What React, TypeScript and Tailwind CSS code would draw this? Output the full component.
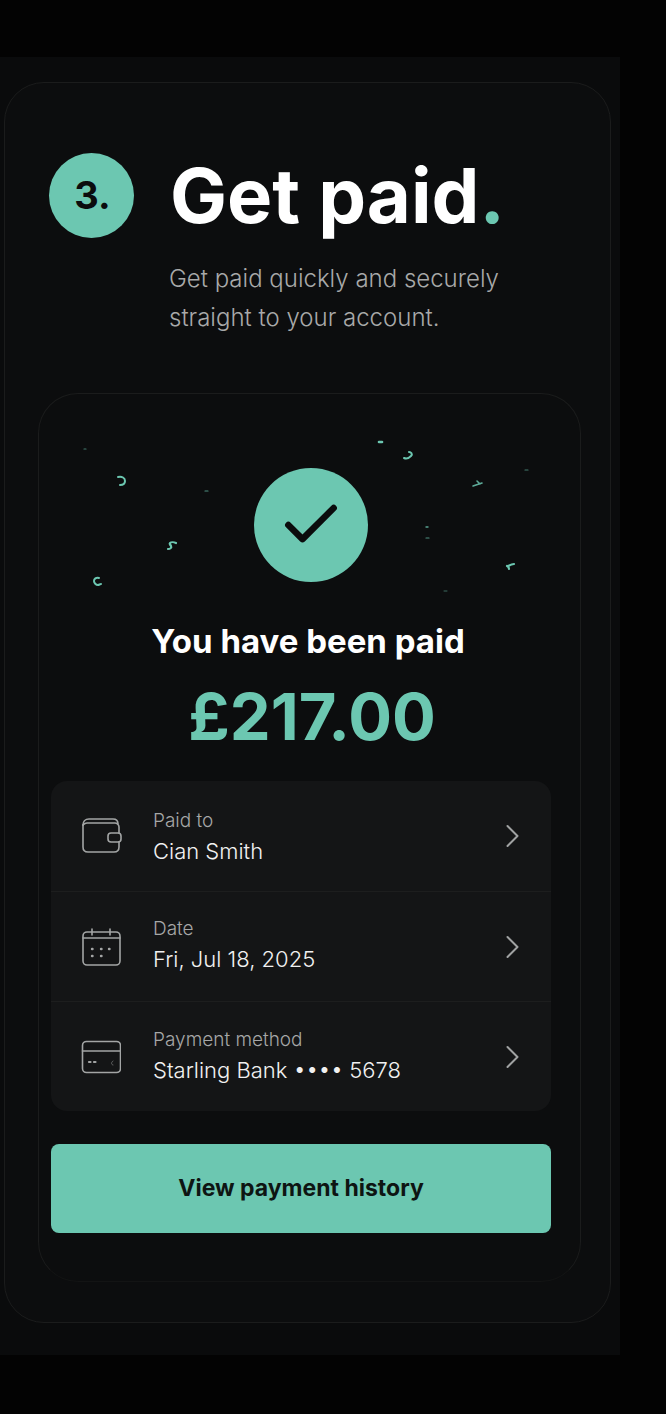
import { Check } from "lucide-react";
import type { ReactNode } from "react";

const FONT = "font-['Inter','Liberation_Sans',sans-serif]";

// confetti squiggles scattered around the tick
const CONFETTI: Array<[string, number, number]> = [
  ["M118 477c4-1 7 1 7 4s-2 4-5 4", 2, 1],
  ["M168 549c2 0 4-1 3-3s-2-2-1-3c1-1 4-1 6 0", 2.2, 1],
  ["M99 578c-3-1-5 1-5 3s2 4 4 4c1 0 2-1 3-1", 2, 1],
  ["M404 458c2 1 5 0 7-2s0-4-2-4", 2, 1],
  ["M379 442h3", 2.6, 1],
  ["M473 486l9-3M477 481l3 3", 1.6, 0.85],
  ["M507 566c2 1 2 3 2 3M508 566c2-1 5-2 6-2", 2.2, 1],
  ["M426 527h2", 1.4, 0.8],
  ["M426 538h3", 1.2, 0.7],
  ["M205 491h3", 1.2, 0.7],
  ["M84 449h2", 1.2, 0.6],
  ["M525 470h3", 1.2, 0.6],
  ["M444 591h3", 1, 0.5],
];

function WalletIcon() {
  return (
    <svg width="42" height="38" viewBox="0 0 42 38" fill="none" stroke="#a3a5a5" strokeWidth="1.6" strokeLinecap="round" strokeLinejoin="round">
      <path d="M2 8c0-3 2-6 6-6h24c3 0 5 2 5 5" />
      <path d="M2 8v22c0 3 2 5 5 5h26c3 0 5-2 5-5v-5" />
      <path d="M2 8c1-1 2-2 4-2h28c2 0 4 2 4 4v6" />
      <rect x="27" y="16" width="13" height="9" rx="3" />
    </svg>
  );
}

function CalendarIcon() {
  return (
    <svg width="40" height="40" viewBox="0 0 40 40" fill="none" stroke="#a3a5a5" strokeWidth="1.6" strokeLinecap="round" strokeLinejoin="round">
      <rect x="2" y="5" width="37" height="33" rx="4" />
      <path d="M2 11h37M11 2v6M29 2v6" />
      <path d="M11 22h.5M20 22h.5M28 22h.5M11 29h.5M20 29h.5" strokeWidth="2.400" />
    </svg>
  );
}

function CardIcon() {
  return (
    <svg width="40" height="34" viewBox="0 0 40 34" fill="none" stroke="#a3a5a5" strokeWidth="1.6" strokeLinecap="round" strokeLinejoin="round">
      <rect x="1.500" y="1.500" width="38" height="31" rx="4" />
      <path d="M1.500 11h38" />
      <path d="M8 22h1.500M13 22h1.500" strokeWidth="2.200" />
      <path d="M32 25c-2 0-2-3 0-4" strokeWidth="1" opacity="0.5" />
    </svg>
  );
}

function Chevron() {
  return (
    <svg width="13" height="24" viewBox="0 0 13 24" fill="none" stroke="#a0a2a2" strokeWidth="2" strokeLinecap="round" strokeLinejoin="round">
      <path d="M1.500 2l10 10-10 10" />
    </svg>
  );
}

function DetailRow({ icon, label, value, className, textClass }: { icon: ReactNode; label: string; value: string; className: string; textClass: string }) {
  return (
    <div className={`flex items-center pl-[30px] pr-[32px] ${className}`}>
      <div className="flex w-[72px] shrink-0 items-center">{icon}</div>
      <div className={`flex-1 ${textClass}`}>
        <div className="text-[19px] font-light leading-[24px] text-[#a6a7a7]">{label}</div>
        <div className="mt-[3px] text-[22px] font-light leading-[30px] text-[#f1f1f1]">{value}</div>
      </div>
      <Chevron />
    </div>
  );
}

export default function App() {
  return (
    <div className={`h-[1414px] w-[666px] overflow-hidden bg-[#030303] pt-[57px] ${FONT}`}>
      <div className="h-[1298px] w-[620px] bg-[#0a0b0c] pl-[4px] pt-[25px]">
        <div className="h-[1241px] w-[607px] rounded-[40px] border border-[#1b1c1c] bg-[#0c0d0e] pt-[70px]">
          <div className="flex items-center pl-[44px]">
            <div className="flex h-[85px] w-[85px] shrink-0 items-center justify-center rounded-full bg-[#6cc7b1] pl-[2px] text-[38px] font-bold text-[#0b0c0d]">
              3.
            </div>
            <h1 className="ml-[36px] whitespace-nowrap text-[76px] font-bold leading-[85px] text-white">
              Get paid<span className="text-[#6cc7b1]">.</span>
            </h1>
          </div>
          <p className="ml-[164px] mt-[21px] text-[24px] font-light leading-[39px] text-[#a8a9a9]">
            Get paid quickly and securely
            <br />
            straight to your account.
          </p>

          <div className="relative ml-[33px] mt-[56px] h-[889px] w-[543px] rounded-[40px] border border-[#1b1c1c] border-b-[#131414] bg-[#0c0d0e] px-[12px] pt-[74px]">
            <svg className="absolute left-[-39px] top-[-394px]" width="666" height="700" fill="none" stroke="#6cc7b1" strokeLinecap="round" strokeLinejoin="round">
              {CONFETTI.map(([d, w, o]) => (
                <path key={d} d={d} strokeWidth={w} opacity={o} />
              ))}
            </svg>
            <div className="relative flex w-[520px] flex-col items-center">
              <div className="flex h-[114px] w-[114px] items-center justify-center rounded-full bg-[#6cc7b1]">
                <Check size={68} strokeWidth={2.3} className="text-[#0b0c0d]" />
              </div>
              <div className="mt-[37px] whitespace-nowrap pr-[6px] text-[33px] font-bold leading-[44px] text-white">You have been paid</div>
              <div className="mt-[12px] whitespace-nowrap pl-[2px] text-[65px] font-bold leading-[84px] text-[#6cc7b1]">£217.00</div>
            </div>

            <div className="mt-[22px] w-[500px] rounded-[16px] bg-[#141516]">
              <DetailRow
                className="h-[111px] border-b border-[#1d1e1e]"
                textClass="pt-[2px]"
                icon={<WalletIcon />}
                label="Paid to"
                value="Cian Smith"
              />
              <DetailRow
                className="h-[110px] border-b border-[#1d1e1e]"
                textClass="pb-[3px]"
                icon={<CalendarIcon />}
                label="Date"
                value="Fri, Jul 18, 2025"
              />
              <DetailRow
                className="h-[109px]"
                textClass="pb-[1px]"
                icon={<CardIcon />}
                label="Payment method"
                value="Starling Bank •••• 5678"
              />
            </div>

            <div className="mt-[33px] flex h-[89px] w-[500px] items-center justify-center rounded-[8px] bg-[#6cc7b1] text-[23px] font-bold text-[#0e1513]">
              View payment history
            </div>
          </div>
        </div>
      </div>
    </div>
  );
}
